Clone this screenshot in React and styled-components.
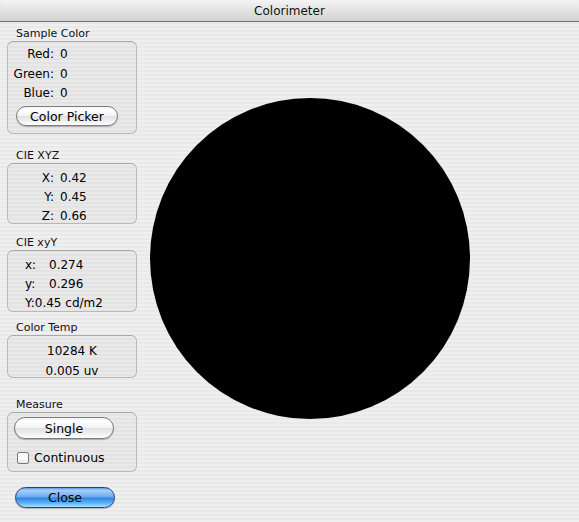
import styled, { createGlobalStyle } from "styled-components";

const Global = createGlobalStyle`
  html, body {
    margin: 0;
    padding: 0;
  }
  body {
    font-family: "DejaVu Sans", "Liberation Sans", sans-serif;
    color: #000;
  }
`

const Window = styled.div`
  width: 579px;
  height: 522px;
  overflow: hidden;
  display: flex;
  flex-direction: column;
  background: repeating-linear-gradient(
    to bottom,
    #efefef 0px,
    #efefef 2px,
    #e9e9e9 2px,
    #e9e9e9 4px
  );
`

const TitleBar = styled.div`
  height: 21px;
  flex: none;
  border-bottom: 1px solid #747474;
  border-radius: 5px 5px 0 0;
  background: linear-gradient(to bottom, #f4f4f4 0%, #e4e4e4 45%, #d2d2d2 100%);
  display: flex;
  align-items: center;
  justify-content: center;
  font-size: 12px;
  color: #111;
`

const Body = styled.div`
  flex: 1;
  display: flex;
  align-items: flex-start;
`

const Sidebar = styled.div`
  width: 130px;
  padding: 5px 0 0 7px;
  display: flex;
  flex-direction: column;
`

const Group = styled.div`
  margin-top: ${p => p.$top || 0}px;
`

const GroupLabel = styled.div`
  font-size: 11px;
  line-height: 14px;
  height: 14px;
  padding-left: 9px;
  color: #111;
`

const Box = styled.div`
  box-sizing: border-box;
  width: 130px;
  height: ${p => p.$h}px;
  padding-top: ${p => p.$pad}px;
  border: 1px solid #b9b9b9;
  border-top-color: #a9a9a9;
  border-radius: 6px;
  background: rgba(0, 0, 0, 0.025);
  display: flex;
  flex-direction: column;
`

const Row = styled.div`
  display: grid;
  grid-template-columns: 46px auto;
  column-gap: 6px;
  font-size: 12px;
  line-height: ${p => p.$lh || 20}px;
  height: ${p => p.$lh || 20}px;
`

const Key = styled.span`
  text-align: right;
`

const Line = styled.div`
  flex: none;
  font-size: 12px;
  line-height: ${p => p.$lh || 19}px;
  height: ${p => p.$lh || 19}px;
  padding-left: ${p => p.$indent || 0}px;
  text-align: ${p => (p.$center ? "center" : "left")};
  white-space: nowrap;
`

const Tab = styled.span`
  display: inline-block;
  width: 24px;
`

const PillButton = styled.button`
  box-sizing: border-box;
  width: ${p => p.$w}px;
  height: ${p => p.$h}px;
  margin-left: ${p => p.$left}px;
  margin-top: ${p => p.$top || 0}px;
  padding: 0;
  border: 1px solid ${p => (p.$blue ? "#2d3f86" : "#7d7d7d")};
  border-radius: 11px;
  font-family: "DejaVu Sans", "Liberation Sans", sans-serif;
  font-size: 12.5px;
  color: #000;
  background: ${p =>
    p.$blue
      ? "linear-gradient(to bottom, #5d98e4 0%, #a9cff8 12%, #6aa9ef 48%, #2f83e2 52%, #5cb4f8 80%, #a6e4ff 100%)"
      : "linear-gradient(to bottom, #f2f2f2 0%, #ffffff 15%, #f3f3f3 48%, #e1e1e1 52%, #f4f4f4 85%, #ffffff 100%)"};
  box-shadow: 0 1px 1px rgba(0, 0, 0, 0.25);
`

const CheckRow = styled.label`
  display: flex;
  align-items: center;
  margin: 11px 0 0 9px;
  font-size: 12.5px;
  gap: 5px;
`

const CheckBox = styled.span`
  box-sizing: border-box;
  width: 12px;
  height: 12px;
  border: 1px solid #7a7a7a;
  border-radius: 2px;
  background: linear-gradient(to bottom, #f6f6f6, #ffffff 50%, #e6e6e6);
`

const Stage = styled.div`
  margin: 76px 0 0 13px;
`

const Disc = styled.div`
  width: 320px;
  height: 321px;
  border-radius: 50%;
  background: #000;
`

export default function App() {
  return (
    <>
      <Global />
      <Window>
        <TitleBar>Colorimeter</TitleBar>
        <Body>
          <Sidebar>
            <Group>
              <GroupLabel>Sample Color</GroupLabel>
              <Box $h={93} $pad={2}>
                <Row><Key>Red:</Key><span>0</span></Row>
                <Row><Key>Green:</Key><span>0</span></Row>
                <Row $lh={19}><Key>Blue:</Key><span>0</span></Row>
                <PillButton $w={102} $h={20} $left={8} $top={3}>Color Picker</PillButton>
              </Box>
            </Group>
            <Group $top={15}>
              <GroupLabel>CIE XYZ</GroupLabel>
              <Box $h={61} $pad={5}>
                <Row $lh={19}><Key>X:</Key><span>0.42</span></Row>
                <Row $lh={19}><Key>Y:</Key><span>0.45</span></Row>
                <Row $lh={19}><Key>Z:</Key><span>0.66</span></Row>
              </Box>
            </Group>
            <Group $top={12}>
              <GroupLabel>CIE xyY</GroupLabel>
              <Box $h={62} $pad={5}>
                <Line $indent={17}><Tab>x:</Tab>0.274</Line>
                <Line $indent={17}><Tab>y:</Tab>0.296</Line>
                <Line $indent={17}>Y:0.45 cd/m2</Line>
              </Box>
            </Group>
            <Group $top={9}>
              <GroupLabel>Color Temp</GroupLabel>
              <Box $h={43} $pad={5}>
                <Line $center $lh={20}>10284 K</Line>
                <Line $center $lh={20}>0.005 uv</Line>
              </Box>
            </Group>
            <Group $top={20}>
              <GroupLabel>Measure</GroupLabel>
              <Box $h={60} $pad={4}>
                <PillButton $w={100} $h={22} $left={6}>Single</PillButton>
                <CheckRow>
                  <CheckBox />
                  Continuous
                </CheckRow>
              </Box>
            </Group>
            <PillButton $blue $w={100} $h={21} $left={8} $top={15}>Close</PillButton>
          </Sidebar>
          <Stage>
            <Disc />
          </Stage>
        </Body>
      </Window>
    </>
  )
}
